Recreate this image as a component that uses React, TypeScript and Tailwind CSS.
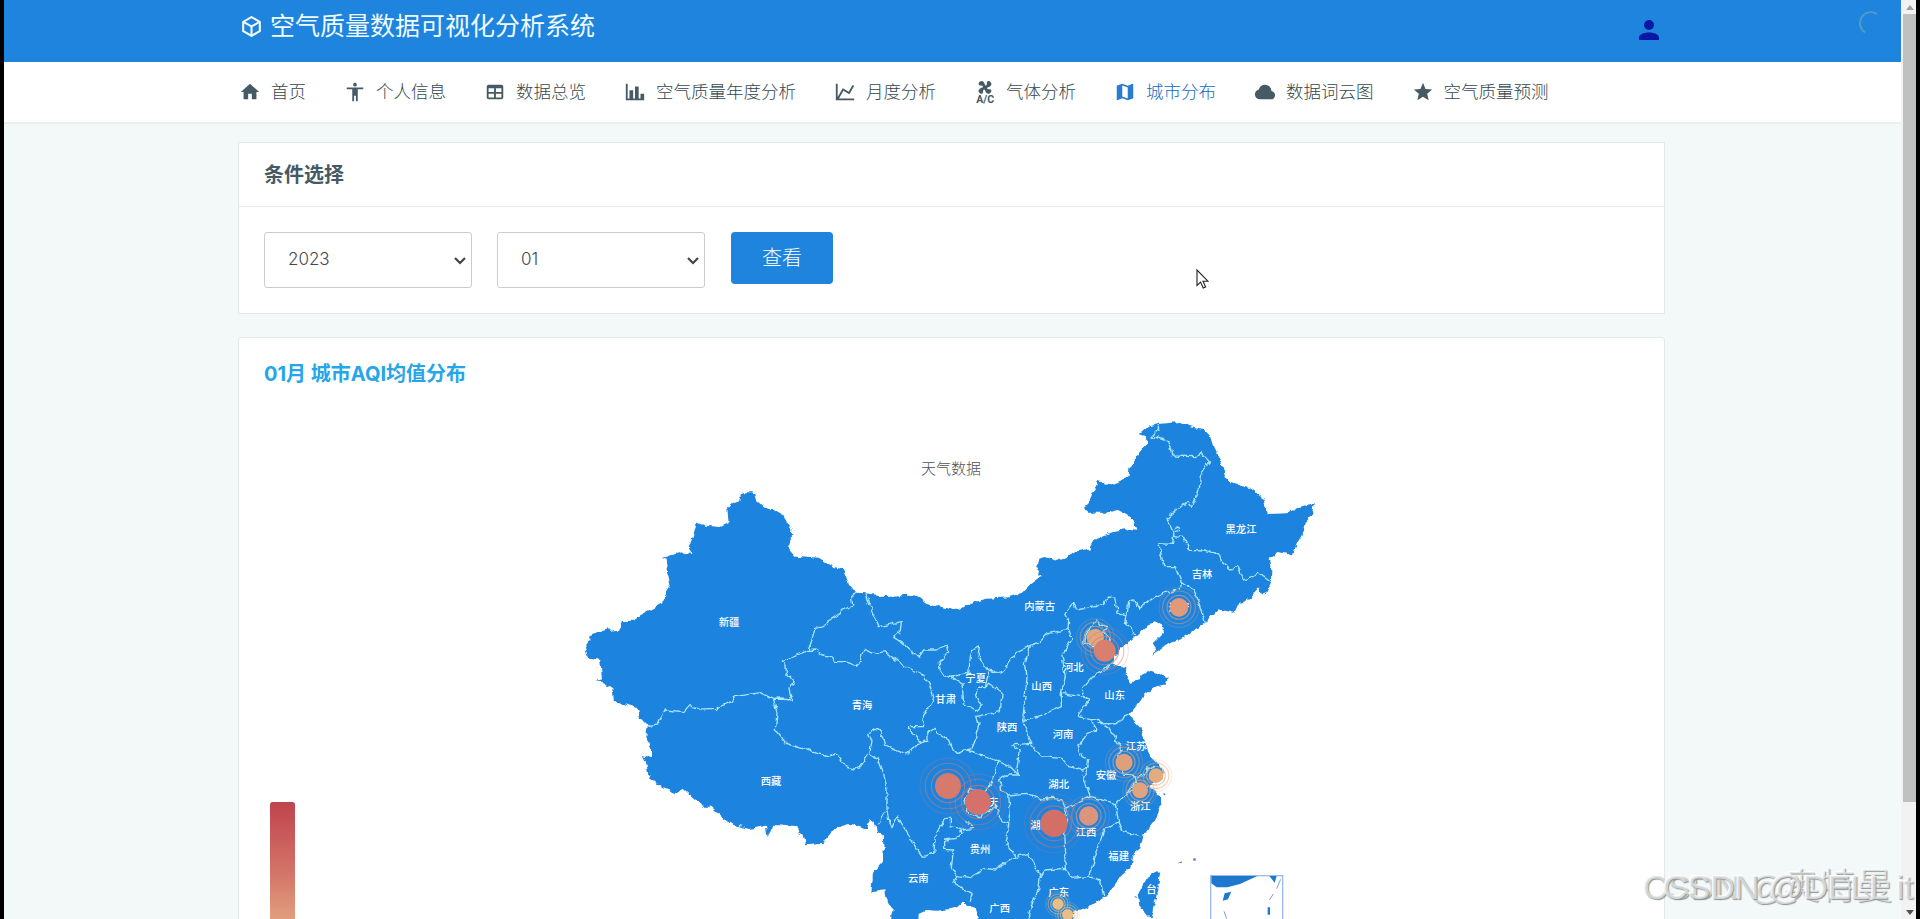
import { useState } from 'react';
import { clsx } from 'clsx';

// mdi icons, 24x24 grid
const icons: Record<string, string> = {
  cube: 'M21,16.5C21,16.88 20.79,17.21 20.47,17.38L12.57,21.82C12.41,21.94 12.21,22 12,22C11.79,22 11.59,21.94 11.43,21.82L3.53,17.38C3.21,17.21 3,16.88 3,16.5V7.5C3,7.12 3.21,6.79 3.53,6.62L11.43,2.18C11.59,2.06 11.79,2 12,2C12.21,2 12.41,2.06 12.57,2.18L20.47,6.62C20.79,6.79 21,7.12 21,7.5V16.5M12,4.15L6.04,7.5L12,10.85L17.96,7.5L12,4.15M5,15.91L11,19.29V12.58L5,9.21V15.91M19,15.91V9.21L13,12.58V19.29L19,15.91Z',
  home: 'M10,20V14H14V20H19V12H22L12,3L2,12H5V20H10Z',
  human: 'M21,9H15V22H13V16H11V22H9V9H3V7H21V9M12,2A2,2 0 0,1 14,4A2,2 0 0,1 12,6C10.89,6 10,5.1 10,4C10,2.89 10.89,2 12,2Z',
  table: 'M5,4H19A2,2 0 0,1 21,6V18A2,2 0 0,1 19,20H5A2,2 0 0,1 3,18V6A2,2 0 0,1 5,4M5,8V12H11V8H5M13,8V12H19V8H13M5,14V18H11V14H5M13,14V18H19V14H13Z',
  bar: 'M22,21H2V3H4V19H6V10H10V19H12V6H16V19H18V14H22V21Z',
  line: 'M16,11.78L20.24,4.45L21.97,5.45L16.74,14.5L10.23,10.75L5.46,19H22V21H2V3H4V17.54L9.5,8L16,11.78Z',
  fan: 'M6.59,0.66C8.93,-1.15 11.47,1.06 12.04,4.5C12.47,4.5 12.89,4.62 13.27,4.84C13.79,4.24 14.25,3.42 14.07,2.5C13.65,0.35 16.06,-1.39 18.35,1.58C20.16,3.92 17.95,6.46 14.5,7.03C14.5,7.46 14.39,7.89 14.16,8.27C14.76,8.78 15.58,9.24 16.5,9.06C18.63,8.64 20.38,11.04 17.41,13.34C15.07,15.15 12.53,12.94 11.96,9.5C11.53,9.5 11.11,9.37 10.74,9.15C10.22,9.75 9.75,10.58 9.93,11.5C10.35,13.64 7.94,15.39 5.65,12.42C3.83,10.07 6.05,7.53 9.5,6.97C9.5,6.54 9.63,6.12 9.85,5.74C9.25,5.23 8.43,4.76 7.5,4.94C5.37,5.36 3.62,2.96 6.59,0.66Z',
  map: 'M15,19L9,16.89V5L15,7.11M20.5,3C20.44,3 20.39,3 20.34,3L15,5.1L9,3L3.36,4.9C3.15,4.97 3,5.15 3,5.38V20.5A0.5,0.5 0 0,0 3.5,21C3.55,21 3.61,21 3.66,20.97L9,18.9L15,21L20.64,19.1C20.85,19 21,18.85 21,18.62V3.5A0.5,0.5 0 0,0 20.5,3Z',
  cloud: 'M6.5 20Q4.22 20 2.61 18.43 1 16.85 1 14.58 1 12.63 2.17 11.1 3.35 9.57 5.25 9.15 5.88 6.85 7.75 5.43 9.63 4 12 4 14.93 4 16.96 6.04 19 8.07 19 11 20.73 11.2 21.86 12.5 23 13.78 23 15.5 23 17.38 21.69 18.69 20.38 20 18.5 20Z',
  star: 'M12,17.27L18.18,21L16.54,13.97L22,9.24L14.81,8.62L12,2L9.19,8.62L2,9.24L7.45,13.97L5.82,21L12,17.27Z',
  account: 'M12,4A4,4 0 0,1 16,8A4,4 0 0,1 12,12A4,4 0 0,1 8,8A4,4 0 0,1 12,4M12,14C16.42,14 20,15.79 20,18V20H4V18C4,15.79 7.58,14 12,14Z',
};

const navItems = [
  { icon: 'home', label: '首页' },
  { icon: 'human', label: '个人信息' },
  { icon: 'table', label: '数据总览' },
  { icon: 'bar', label: '空气质量年度分析' },
  { icon: 'line', label: '月度分析' },
  { icon: 'fan', label: '气体分析' },
  { icon: 'map', label: '城市分布', active: true },
  { icon: 'cloud', label: '数据词云图' },
  { icon: 'star', label: '空气质量预测' },
];

// 地图轮廓
const outline =
  '48,740 62,722 62,708 78,700 95,692 118,685 122,695 150,692 163,663 195,662 215,646 245,630 284,610 287,582 300,562 305,553 296,520 291,476 278,474 340,457 368,462 360,442 375,400 386,367 410,377 455,381 480,370 476,325 490,311 515,303 522,277 555,277 562,300 595,330 615,330 642,345 668,388 666,420 658,442 680,467 750,473 800,502 823,508 840,550 860,578 892,580 950,588 1025,584 1055,592 1075,608 1130,624 1167,631 1205,608 1255,596 1320,592 1360,578 1385,552 1418,527 1402,498 1415,472 1435,468 1465,483 1490,475 1518,455 1565,445 1580,418 1620,400 1670,388 1703,392 1695,368 1675,343 1645,327 1612,338 1558,338 1548,322 1560,310 1575,275 1588,243 1625,254 1680,230 1682,205 1710,160 1733,132 1732,108 1710,103 1730,85 1768,72 1830,66 1870,80 1905,88 1928,112 1940,150 1958,190 1972,230 1982,248 2045,265 2080,290 2098,342 2155,340 2190,322 2235,308 2230,345 2212,365 2203,400 2185,430 2172,466 2130,456 2100,476 2108,510 2107,550 2095,577 2080,583 2068,565 2055,580 2050,595 2010,610 1997,638 1950,628 1935,642 1910,665 1880,688 1852,712 1800,732 1748,765 1762,745 1752,730 1785,697 1785,680 1758,667 1735,678 1700,710 1685,725 1660,740 1640,765 1630,790 1670,805 1668,825 1685,845 1710,838 1735,813 1765,822 1797,835 1790,853 1760,860 1728,885 1710,910 1680,945 1715,980 1735,1040 1742,1065 1768,1090 1782,1115 1780,1138 1750,1150 1745,1165 1760,1175 1775,1192 1775,1220 1760,1260 1725,1305 1715,1345 1690,1365 1685,1405 1660,1425 1640,1455 1610,1490 1570,1515 1540,1528 1515,1532 1505,1600 1230,1600 1230,1550 1222,1525 1180,1508 1165,1522 1140,1528 1100,1532 1075,1530 1050,1542 1048,1600 965,1600 968,1550 972,1522 955,1510 950,1468 908,1474 912,1440 912,1420 943,1385 945,1350 942,1305 925,1295 918,1265 903,1257 895,1287 850,1270 820,1278 785,1300 765,1328 712,1333 705,1305 690,1298 683,1278 625,1272 608,1285 597,1315 592,1277 545,1287 495,1275 460,1252 425,1220 405,1220 345,1167 320,1180 285,1165 240,1132 232,1085 222,1065 247,1072 247,1045 233,1015 237,978 213,952 207,925 165,912 135,902 133,870 110,852 80,843 100,838 95,780 58,772';

const taiwan = '1765,1410 1774,1420 1765,1480 1745,1560 1715,1520 1710,1480 1735,1430';

// 省界
const borders = [
  '860,578 849,590 852,618 820,632 785,655 768,680 738,685 730,720 718,752 638,783 652,792 653,818 680,850 660,865 670,900 635,897 615,898',
  '615,898 575,878 500,890 490,905 440,925 380,928 365,913 345,935 290,930 270,970 237,978',
  '718,752 740,750 760,765 790,770 797,785 830,785 860,796 875,780 885,748 915,760 950,755 990,787 1030,810 1065,825 1085,860 1095,895 1062,955 1068,980 1020,980 1030,1000 1055,1025 1035,1045 1015,1062 980,1048 950,1035 945,1010 930,990 912,987 900,1005 910,1020 903,1060',
  '615,898 625,940 620,990 650,1030 700,1045 775,1070 800,1062 830,1100 855,1107 875,1100 903,1060 930,1080 945,1120 955,1170 955,1230 960,1262 970,1280 985,1245 1010,1290 1040,1340 1062,1370 1095,1360 1100,1310 1130,1252 1145,1252 1145,1280 1175,1285 1180,1300 1165,1315 1125,1320 1125,1348 1155,1350 1148,1400 1165,1430 1153,1447 1210,1480 1205,1505',
  '930,1270 945,1240 957,1235',
  '1055,1025 1075,1020 1075,1000 1100,985 1115,1005 1140,1020 1150,1050 1170,1060 1195,1050 1210,1045 1220,1020 1228,965 1220,950 1260,942 1295,935 1300,880 1260,850 1250,860',
  '1145,830 1180,850 1185,910 1220,933 1238,915 1220,885 1240,860 1250,860 1260,815',
  '892,580 912,640 932,680 998,665 995,695 975,712 1010,735 1050,772 1065,750 1100,750 1135,735 1140,755 1112,790 1115,815 1142,832 1175,825 1200,820 1205,770 1215,748 1232,740 1228,770 1260,810 1290,820 1310,815 1315,795 1345,755 1380,738 1410,728 1440,700 1498,688',
  '1385,738 1370,790 1375,830 1362,960 1385,1030 1420,1070 1480,1075 1500,1100 1540,1110 1560,1100',
  '1498,688 1500,660 1490,640 1515,610 1525,630 1580,620 1605,610 1620,588 1638,592 1645,640 1675,648 1680,605 1695,600 1710,625 1760,590 1790,578 1835,570 1838,545',
  '1675,648 1670,670 1690,685 1698,708',
  '1498,688 1510,715 1480,765 1490,830 1478,880 1478,920 1420,945 1362,962',
  '1478,880 1550,892 1540,865 1570,830 1600,815 1630,790',
  '1550,892 1565,897 1530,935 1535,950 1570,960 1590,955 1600,970 1640,972 1660,960 1665,950 1680,945',
  '1570,965 1585,990 1555,1000 1530,1045 1540,1070 1560,1080 1555,1110 1545,1130 1565,1190',
  '1590,965 1620,985 1640,1020 1660,1050 1645,1070 1665,1125 1700,1130 1705,1165 1680,1180',
  '1385,1030 1330,1035 1352,1050 1345,1105 1350,1125 1310,1125 1290,1140 1300,1170 1320,1185 1370,1180 1420,1200 1450,1195 1480,1200 1490,1225 1530,1205 1565,1190 1600,1200 1620,1205 1640,1215 1665,1185 1680,1175 1705,1140',
  '1705,1135 1725,1125 1738,1105 1760,1095',
  '1705,1165 1740,1160',
  '1640,1215 1650,1265 1665,1295 1715,1310',
  '1650,1265 1605,1290 1590,1340 1560,1430 1595,1440 1605,1490',
  '1490,1225 1498,1255 1485,1300 1490,1405 1510,1435 1555,1430',
  '1320,1185 1325,1250 1310,1325 1340,1370 1380,1360 1415,1430 1430,1410 1490,1405',
  '1165,1430 1200,1435 1250,1405 1280,1410 1340,1370',
  '1415,1430 1410,1470 1390,1510 1375,1560',
  '1195,1050 1240,1065 1290,1085 1325,1100 1350,1125',
  '1290,1085 1280,1120 1265,1150 1250,1175 1205,1165 1185,1205 1200,1240 1235,1250 1280,1220 1300,1265 1318,1270',
  '1180,1290 1215,1285 1190,1260',
  '1765,75 1768,90 1750,108 1800,125 1810,168 1880,170 1895,155 1922,185 1895,225 1892,268 1868,322 1855,305 1795,355 1812,390 1835,380 1835,392 1815,395 1815,408 1812,430 1770,428 1785,500 1820,500 1838,545 1875,570 1885,590 1900,640 1910,665',
  '1818,410 1845,412 1865,448 1905,450 1950,462 1960,487 1990,510 2005,497 2025,540 2070,520 2107,547',
  '1545,730 1548,705 1565,690 1583,660 1595,675 1615,680 1605,700 1625,720 1600,745 1560,735 1545,730',
];

const provinces: [string, number, number][] = [
  ['新疆', 477, 668], ['西藏', 603, 1143], ['青海', 876, 917], ['甘肃', 1127, 897],
  ['宁夏', 1217, 836], ['内蒙古', 1409, 620], ['黑龙江', 2013, 387], ['吉林', 1896, 522],
  ['河北', 1510, 801], ['山西', 1415, 858], ['山东', 1634, 885], ['陕西', 1311, 981],
  ['河南', 1479, 1004], ['江苏', 1698, 1040], ['安徽', 1608, 1125], ['湖北', 1466, 1152],
  ['浙江', 1711, 1218], ['湖南', 1412, 1275], ['江西', 1548, 1297], ['福建', 1646, 1370],
  ['贵州', 1230, 1347], ['云南', 1045, 1434], ['广东', 1466, 1478], ['广西', 1289, 1526],
  ['台湾', 1760, 1467], ['重庆', 1253, 1207], ['辽宁', 1827, 622],
];

const cities: { x: number; y: number; r: number; color: string }[] = [
  { x: 1134, y: 1158, r: 39, color: '#d67a6d' },
  { x: 1224, y: 1206, r: 39, color: '#d4716a' },
  { x: 1452, y: 1270, r: 41, color: '#d27067' },
  { x: 1556, y: 1248, r: 29, color: '#dd947c' },
  { x: 1576, y: 712, r: 26, color: '#e1a780' },
  { x: 1604, y: 752, r: 33, color: '#d97f6d' },
  { x: 1827, y: 622, r: 28, color: '#e09a7a' },
  { x: 1662, y: 1087, r: 26, color: '#e09f7b' },
  { x: 1758, y: 1127, r: 22, color: '#e3ac80' },
  { x: 1710, y: 1171, r: 24, color: '#e0a37d' },
  { x: 1464, y: 1512, r: 17, color: '#e9bd84' },
  { x: 1493, y: 1544, r: 17, color: '#e9bd84' },
];

function Icon({ name, className }: { name: string; className?: string }) {
  return (
    <svg viewBox="0 0 24 24" className={clsx('shrink-0 overflow-visible', className)} fill="currentColor">
      <path d={icons[name]} />
      {name === 'fan' && (
        <text x="2.4" y="24" fontSize="11.5" fontWeight="700" textLength="19.5" lengthAdjust="spacingAndGlyphs" className="font-['Roboto',sans-serif]">
          A/C
        </text>
      )}
    </svg>
  );
}

function Select({ value, options, onChange }: { value: string; options: string[]; onChange: (v: string) => void }) {
  return (
    <div className="relative h-[56px] w-[208px]">
      <select
        value={value}
        onChange={(e) => onChange(e.target.value)}
        className="h-full w-full appearance-none rounded-[3px] border border-[#c9cdd0] bg-[#fefffe] pl-[23px] text-[17px] font-light text-[#44494e] outline-none"
      >
        {options.map((o) => (
          <option key={o}>{o}</option>
        ))}
      </select>
      <svg viewBox="0 0 12 8" className="pointer-events-none absolute right-[6px] top-[25px] h-[8px] w-[12px]" fill="none" stroke="#444" strokeWidth="2.2">
        <path d="M1 1l5 5 5-5" />
      </svg>
    </div>
  );
}

function ChinaMap() {
  return (
    <svg viewBox="-918 0 4128 1557" className="block h-[519px] w-[1376px] overflow-hidden">
      <defs>
        <linearGradient id="visual" x1="0" y1="1206" x2="0" y2="1626" gradientUnits="userSpaceOnUse">
          <stop offset="0" stopColor="#c0434e" />
          <stop offset="0.5" stopColor="#d37468" />
          <stop offset="1" stopColor="#e8b388" />
        </linearGradient>
        {/* 让边界线呈锯齿状 */}
        <filter id="coast" x="-5%" y="-5%" width="110%" height="110%">
          <feTurbulence type="fractalNoise" baseFrequency="0.05" numOctaves="2" seed="4" result="n" />
          <feDisplacementMap in="SourceGraphic" in2="n" scale="17" xChannelSelector="R" yChannelSelector="G" />
        </filter>
      </defs>

      <rect x="-900" y="1206" width="75" height="600" rx="8" fill="url(#visual)" />

      <text x="1143" y="223" fontSize="45" textAnchor="middle" fill="#505356" fontWeight="300">
        天气数据
      </text>

      <g transform="translate(-4 0)">
        <g filter="url(#coast)">
          <polygon points={outline} fill="#1e84de" />
          <polygon points={taiwan} fill="#1e84de" />
          <g fill="none" stroke="#a9e6f8" strokeWidth="4" strokeLinejoin="round">
            {borders.map((b) => (
              <polyline key={b} points={b} />
            ))}
          </g>
        </g>
      </g>
      <g fill="#4d82cc">
        <path d="M1822 1390l14-6v4zM1870 1375h7v7h-7zM1780 1178l7 4-5 5zM1692 1488l10 3-4 3z" />
      </g>

      {/* 南海诸岛 */}
      <rect x="1922" y="1427" width="216" height="300" fill="none" stroke="#9cbce8" strokeWidth="4" />
      <g fill="#1e78cf">
        <path d="M1924 1428H2062L2010 1452L1972 1462H1940L1924 1450ZM2098 1428H2120L2114 1448ZM1964 1480L1984 1475L1974 1498L1958 1502ZM2093 1522H2100V1544H2093Z" />
      </g>
      <path d="M2132 1438L2120 1466M2110 1482L2098 1500M1962 1534L1970 1556" stroke="#8a9cc0" strokeWidth="3" />

      <g fill="#fff" fontSize="31" textAnchor="middle" fontWeight="500">
        {provinces.map(([name, x, y]) => (
          <text key={name} x={x} y={y + 11}>
            {name}
          </text>
        ))}
      </g>

      {cities.map((c) => (
        <g key={`${c.x}-${c.y}`}>
          <g fill="none" stroke={c.color} strokeWidth="3.5">
            <circle cx={c.x} cy={c.y} r={c.r * 1.28} opacity="0.65" />
            <circle cx={c.x} cy={c.y} r={c.r * 1.75} opacity="0.5" />
            <circle cx={c.x} cy={c.y} r={c.r * 2.15} opacity="0.22" />
          </g>
          <circle cx={c.x} cy={c.y} r={c.r} fill={c.color} />
        </g>
      ))}
    </svg>
  );
}

export default function App() {
  const [year, setYear] = useState('2023');
  const [month, setMonth] = useState('01');

  return (
    <div className="relative flex h-[919px] w-[1920px] overflow-hidden bg-black pl-1 pr-1 font-['Inter','Noto_Sans_CJK_SC',sans-serif]">
      <div className="h-full w-[1897px] bg-[#f3f8f9]">
        <header className="flex h-[62px] justify-between bg-[#1e84de] pl-[235px] pr-[237px]">
          <h1 className="flex h-[52px] items-center text-[25px] text-[#effcff]">
            <Icon name="cube" className="mr-[6px] h-[25px] w-[25px]" />
            <span className="pt-px leading-none">空气质量数据可视化分析系统</span>
          </h1>
          <Icon name="account" className="mt-[15px] h-[30px] w-[30px] text-[#0618a4]" />
        </header>

        <nav className="flex h-[62px] items-center gap-[38px] border-b-2 border-[#eceeef] bg-[#fefffe] pl-[235px]">
          {navItems.map((item) => (
            <a
              key={item.label}
              href="#"
              className={clsx('flex items-center whitespace-nowrap text-[17.5px] font-light', item.active ? 'text-[#1668bd]' : 'text-[#33474f]')}
            >
              <Icon name={item.icon} className={clsx('mr-[10px] h-[22px] w-[22px]', item.active ? 'text-[#2a7ccf]' : 'text-[#455a64]')} />
              <span className="leading-none">{item.label}</span>
            </a>
          ))}
        </nav>

        <main className="ml-[234px] w-[1427px] pt-[18px]">
          <section className="h-[172px] border border-[#e3e8eb] bg-[#fefffe]">
            <div className="flex h-[64px] items-center border-b border-[#e6e9eb] pl-[25px]">
              <h4 className="text-[20px] font-bold leading-none text-[#455a64]">条件选择</h4>
            </div>
            <div className="flex gap-[25px] pl-[25px] pt-[25px]">
              <Select value={year} options={['2021', '2022', '2023']} onChange={setYear} />
              <Select value={month} options={['01', '02', '03', '04', '05', '06']} onChange={setMonth} />
              <button className="ml-px h-[52px] w-[102px] rounded-[4px] bg-[#1e84de] text-[20px] font-light text-white">查看</button>
            </div>
          </section>

          <section className="mt-[23px] h-[700px] rounded-[3px] border border-[#e3e8eb] bg-[#fefffe] px-[25px]">
            <h4 className="flex h-[62px] items-center pt-[10px] text-[20px] font-bold leading-[30px] text-[#26a5ea]">
              01月 城市AQI均值分布
            </h4>
            <ChinaMap />
          </section>
        </main>
      </div>

      {/* 滚动条 */}
      <div className="flex h-full w-[15px] flex-col items-end bg-[#f1f2f1]">
        <div className="flex h-[14px] w-[13px] items-center justify-center">
          <svg viewBox="0 0 8 5" className="h-[5px] w-[8px]" fill="#a0a0a0">
            <path d="M0 5l4-5 4 5z" />
          </svg>
        </div>
        <div className="h-[788px] w-[13px] bg-[#bfc1c0]" />
        <div className="mt-auto flex h-[13px] w-[13px] items-center justify-center">
          <svg viewBox="0 0 8 5" className="h-[5px] w-[8px]" fill="#505050">
            <path d="M0 0l4 5 4-5z" />
          </svg>
        </div>
      </div>

      {/* 加载动画 */}
      <svg viewBox="0 0 24 24" className="absolute left-[1859px] top-[11px] h-[24px] w-[24px]" fill="none" stroke="#4f9fc4" strokeWidth="1.8">
        <path d="M18 3A11 11 0 0 0 6 21.500" />
      </svg>

      {/* 鼠标指针 */}
      <svg viewBox="0 0 13 20" className="absolute left-[1196px] top-[269px] h-[20px] w-[13px]" fill="#fff" stroke="#222" strokeWidth="1.1">
        <path d="M1 1v15.500l3.600-3.400 2.600 5.900 2.400-1-2.600-5.800h4.900z" />
      </svg>

      {/* 水印 */}
      <div className="pointer-events-none absolute left-[1643px] top-[862px] h-[50px] w-[273px] overflow-hidden whitespace-nowrap font-['Liberation_Sans','Noto_Sans_CJK_SC',sans-serif] text-[34px] font-light leading-[50px] text-[#e3e6e6]/80 [text-shadow:1px_1px_1px_#8f9494,-1px_-1px_0_#fff]">
        <span className="absolute left-0 top-0">
          CSDN @<span className="text-[36.5px]">奥特曼</span>
        </span>
        <span className="absolute left-[20px] top-0">CSDN @DELL it</span>
      </div>
    </div>
  );
}
